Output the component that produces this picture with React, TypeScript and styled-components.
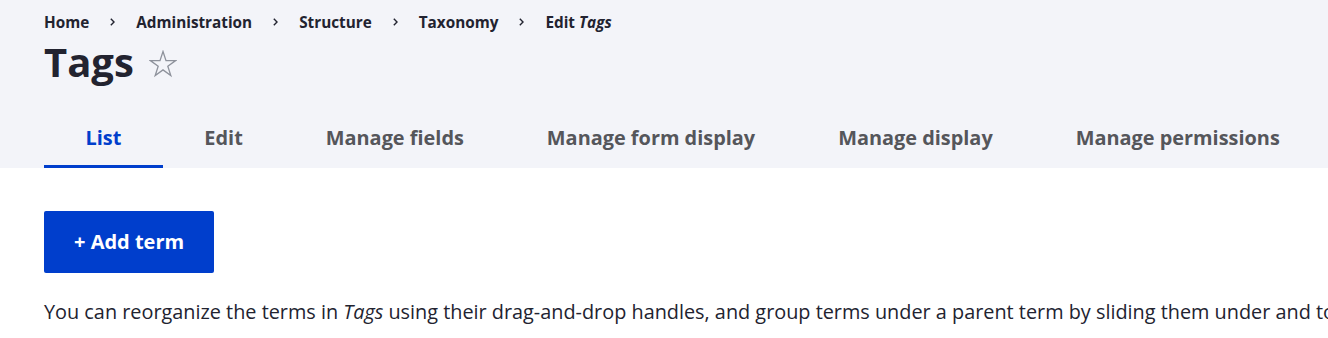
import { createGlobalStyle } from 'styled-components';
import styled from 'styled-components';

const GlobalStyle = createGlobalStyle`
  html, body {
    margin: 0;
    padding: 0;
    background: #fff;
    overflow: hidden;
  }
  body {
    font-family: 'Open Sans', 'Noto Sans', 'DejaVu Sans', sans-serif;
    color: #222330;
  }
`;

const Header = styled.div`
  background: #f3f4f9;
  padding: 0 44px;
`;

const Breadcrumb = styled.nav`
  display: flex;
  align-items: center;
  padding-top: 8px;
  height: 28px;
  font-size: 15.3px;
  line-height: 28px;
  font-weight: 700;
  white-space: nowrap;
`;

const Crumb = styled.a`
  color: #222330;
  text-decoration: none;
`;

const Sep = styled.svg`
  width: 5px;
  height: 8px;
  margin: 0 21px;
  flex: none;
`;

const TitleRow = styled.div`
  display: flex;
  align-items: center;
  margin-top: 2px;
`;

const Title = styled.h1`
  margin: 0;
  font-size: 40px;
  line-height: 48px;
  font-weight: 700;
  color: #222330;
`;

const Star = styled.svg`
  width: 28px;
  height: 28px;
  margin-left: 15px;
  margin-top: 3px;
`;

const Tabs = styled.ul`
  display: flex;
  list-style: none;
  margin: 21px 0 0;
  padding: 0;
  white-space: nowrap;
`;

const Tab = styled.li<{ $active?: boolean }>`
  padding: 3px 41.5px 0;
  line-height: 55px;
  font-size: 19.9px;
  font-weight: 700;
  color: ${(p) => (p.$active ? '#003ecc' : '#55565b')};
  border-bottom: 3px solid ${(p) => (p.$active ? '#003ecc' : 'transparent')};
`;

const Content = styled.div`
  padding: 43px 44px 0;
`;

const Button = styled.a`
  display: inline-block;
  height: 62px;
  line-height: 62px;
  padding: 0 30px;
  background: #003ecc;
  color: #fff;
  border-radius: 2px;
  font-size: 20px;
  font-weight: 700;
  text-decoration: none;
`;

const Text = styled.p`
  margin: 24px 0 0;
  font-size: 19.85px;
  line-height: 30px;
  white-space: nowrap;
`;

const crumbs = ['Home', 'Administration', 'Structure', 'Taxonomy'];
const tabs = ['List', 'Edit', 'Manage fields', 'Manage form display', 'Manage display', 'Manage permissions'];

const Chevron = () => (
  <Sep viewBox="0 0 5 8">
    <path d="M0.8 0.8 L4 4 L0.8 7.2" fill="none" stroke="#222330" strokeWidth="1.4" />
  </Sep>
);

export default function App() {
  return (
    <>
      <GlobalStyle />
      <Header>
        <Breadcrumb>
          {crumbs.map((c) => (
            <span key={c} style={{ display: 'contents' }}>
              <Crumb href="#">{c}</Crumb>
              <Chevron />
            </span>
          ))}
          <span>
            Edit <em>Tags</em>
          </span>
        </Breadcrumb>
        <TitleRow>
          <Title>Tags</Title>
          <Star viewBox="0 0 28 28">
            <path
              d="M14 1.5 L17 10.6 L26.6 10.6 L18.8 16.3 L21.8 25.6 L14 19.9 L6.2 25.6 L9.2 16.3 L1.4 10.6 L11 10.6 Z"
              fill="none"
              stroke="#8e929c"
              strokeWidth="1.3"
              strokeLinejoin="miter"
            />
          </Star>
        </TitleRow>
        <Tabs>
          {tabs.map((t, i) => (
            <Tab key={t} $active={i === 0}>
              {t}
            </Tab>
          ))}
        </Tabs>
      </Header>
      <Content>
        <Button href="#">+ Add term</Button>
        <Text>
          You can reorganize the terms in <em>Tags</em> using their drag-and-drop handles, and group terms under a
          parent term by sliding them under and to the right of the parent.
        </Text>
      </Content>
    </>
  );
}
